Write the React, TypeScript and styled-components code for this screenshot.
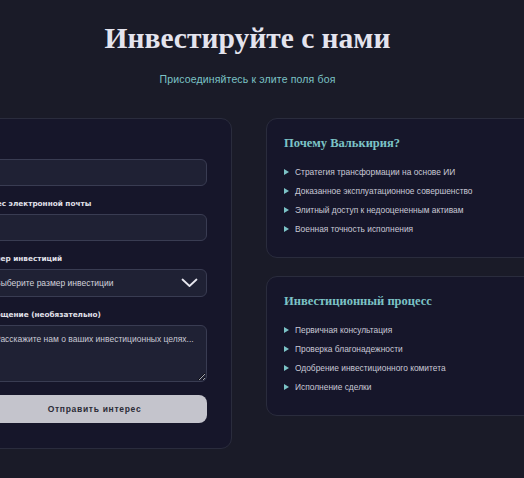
import React from 'react';
import styled, { createGlobalStyle } from 'styled-components';

const GlobalStyle = createGlobalStyle`
  html, body {
    margin: 0;
    background: #1a1b28;
    overflow: hidden;
  }
`;

const Page = styled.div`
  width: 585px;
  margin-left: -45px;
  padding-top: 20px;
`;

const Header = styled.header`
  display: flex;
  flex-direction: column;
  align-items: center;
`;

const Title = styled.h1`
  margin: 0;
  font-family: 'Liberation Serif', serif;
  font-weight: 700;
  font-size: 29.5px;
  line-height: 36px;
  color: #e4e4ee;
`;

const Subtitle = styled.p`
  margin: 17px 0 0;
  font-family: 'Liberation Sans', Arial, sans-serif;
  font-size: 10.5px;
  line-height: 13px;
  letter-spacing: 0.15px;
  color: #7cc3c6;
`;

const Grid = styled.div`
  display: grid;
  grid-template-columns: 277px 274px;
  gap: 34px;
  margin-top: 32px;
  align-items: start;
`;

const Panel = styled.div`
  background: #16162a;
  border: 1px solid #2a2c3d;
  border-radius: 11px;
  box-sizing: border-box;
`;

const FormPanel = styled(Panel)`
  padding: 24px 24px 25px;
`;

const Form = styled.form`
  display: flex;
  flex-direction: column;
  gap: 12px;
  margin: 0;
`;

const Field = styled.label`
  display: flex;
  flex-direction: column;
  gap: 5px;
`;

const Label = styled.span`
  font-family: 'DejaVu Sans', Verdana, sans-serif;
  font-weight: 700;
  font-size: 7.3px;
  line-height: 11px;
  color: #e2e2ea;
`;

const controlBase = `
  box-sizing: border-box;
  width: 100%;
  background: #1f2134;
  border: 1px solid #393c52;
  border-radius: 6px;
  font-family: 'Liberation Sans', Arial, sans-serif;
  font-size: 8.5px;
  color: #d6d6e0;
  outline: none;
`;

const Input = styled.input`
  ${controlBase}
  height: 27px;
  padding: 0 14px;
`;

const SelectBox = styled.div`
  ${controlBase}
  height: 28px;
  padding: 0 8px 0 14px;
  display: flex;
  align-items: center;
  justify-content: space-between;
  color: #d2d2dc;
`;

const TextArea = styled.textarea`
  ${controlBase}
  height: 57px;
  padding: 8px 9px 8px 14px;
  resize: vertical;
  &::placeholder {
    color: #c9c9d4;
  }
`;

const Button = styled.button`
  margin-top: 1px;
  height: 28px;
  padding-left: 8px;
  border: none;
  border-radius: 8px;
  background: #c4c4cc;
  color: #2b2b36;
  font-family: 'Liberation Sans', Arial, sans-serif;
  font-weight: 700;
  font-size: 8.5px;
  letter-spacing: 0.7px;
  cursor: pointer;
`;

const Side = styled.div`
  display: flex;
  flex-direction: column;
  gap: 18px;
`;

const InfoPanel = styled(Panel)`
  padding: 16px 17px 22px;
`;

const InfoTitle = styled.h3`
  margin: 0 0 16px;
  font-family: 'Liberation Serif', serif;
  font-weight: 700;
  font-size: 12.5px;
  line-height: 16px;
  color: #7cc3c6;
`;

const List = styled.ul`
  list-style: none;
  margin: 0;
  padding: 0;
  display: flex;
  flex-direction: column;
  gap: 8px;
`;

const Item = styled.li`
  display: flex;
  align-items: center;
  gap: 6px;
  font-family: 'Liberation Sans', Arial, sans-serif;
  font-size: 8.4px;
  line-height: 11px;
  color: #c9c9d6;
`;

const Bullet = styled.span`
  width: 0;
  height: 0;
  border-top: 3px solid transparent;
  border-bottom: 3px solid transparent;
  border-left: 5px solid #7cc3c6;
  margin-top: -2px;
`;

const Chevron = () => (
  <svg width="17" height="10" viewBox="0 0 17 10" fill="none">
    <path d="M1.5 1.5L8.5 8L15.5 1.5" stroke="#e6e6ee" strokeWidth="1.8" strokeLinecap="round" strokeLinejoin="round" />
  </svg>
);

const why = [
  'Стратегия трансформации на основе ИИ',
  'Доказанное эксплуатационное совершенство',
  'Элитный доступ к недооцененным активам',
  'Военная точность исполнения',
];

const process = [
  'Первичная консультация',
  'Проверка благонадежности',
  'Одобрение инвестиционного комитета',
  'Исполнение сделки',
];

const InfoCard = ({ title, items }: { title: string; items: string[] }) => (
  <InfoPanel>
    <InfoTitle>{title}</InfoTitle>
    <List>
      {items.map((t) => (
        <Item key={t}>
          <Bullet />
          {t}
        </Item>
      ))}
    </List>
  </InfoPanel>
);

export default function App() {
  return (
    <>
      <GlobalStyle />
      <Page>
        <Header>
          <Title>Инвестируйте с нами</Title>
          <Subtitle>Присоединяйтесь к элите поля боя</Subtitle>
        </Header>
        <Grid>
          <FormPanel>
            <Form onSubmit={(e) => e.preventDefault()}>
              <Field>
                <Label>Имя</Label>
                <Input type="text" />
              </Field>
              <Field>
                <Label>Адрес электронной почты</Label>
                <Input type="email" />
              </Field>
              <Field>
                <Label>Размер инвестиций</Label>
                <SelectBox>
                  <span>Выберите размер инвестиции</span>
                  <Chevron />
                </SelectBox>
              </Field>
              <Field>
                <Label>Сообщение (необязательно)</Label>
                <TextArea placeholder="Расскажите нам о ваших инвестиционных целях..." />
              </Field>
              <Button type="submit">Отправить интерес</Button>
            </Form>
          </FormPanel>
          <Side>
            <InfoCard title="Почему Валькирия?" items={why} />
            <InfoCard title="Инвестиционный процесс" items={process} />
          </Side>
        </Grid>
      </Page>
    </>
  );
}
